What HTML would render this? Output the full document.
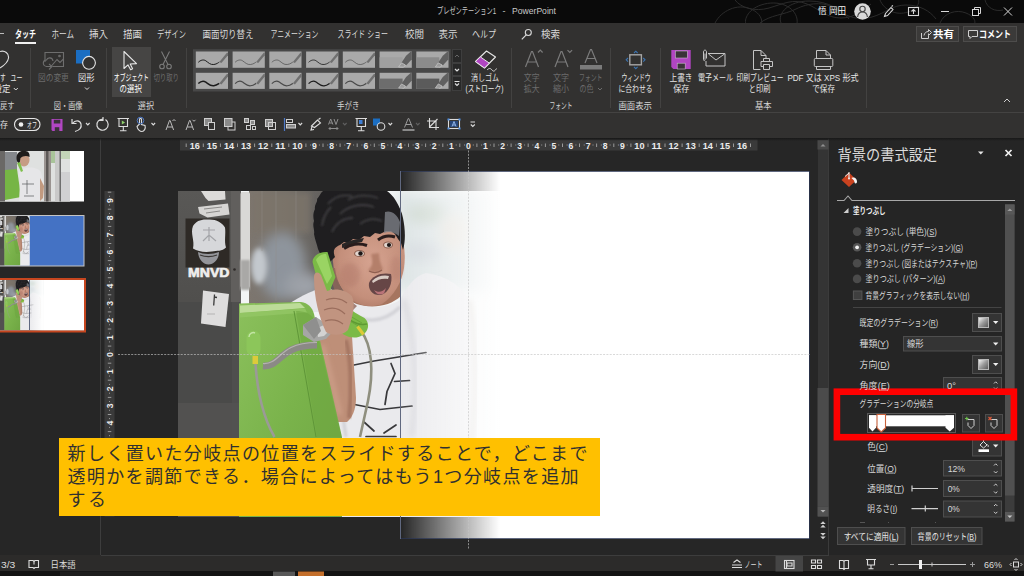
<!DOCTYPE html>
<html lang="ja">
<head>
<meta charset="utf-8">
<title>PowerPoint</title>
<style>
*{box-sizing:border-box;margin:0;padding:0}
html,body{width:1024px;height:576px;overflow:hidden;background:#262626}
body{position:relative;font-family:"Liberation Sans","Noto Sans CJK JP",sans-serif;font-size:11px;color:#d6d6d6;line-height:1}
.a{position:absolute;white-space:nowrap}
svg{position:absolute;overflow:visible}
svg text{font-family:"Liberation Sans","Noto Sans CJK JP",sans-serif}
#titlebar{left:0;top:0;width:1024px;height:23px;background:#0a0a0a}
#tabs{left:0;top:23px;width:1024px;height:22px;background:#323130}
#ribbon{left:0;top:45px;width:1024px;height:68px;background:#323130}
#qat{left:0;top:112px;width:1024px;height:26px;background:#323130;border-top:1px solid #444342}
#work{left:0;top:138px;width:829px;height:417px;background:#262626}
#pane{left:829px;top:138px;width:195px;height:417px;background:#252525}
#status{left:0;top:555px;width:1024px;height:16px;background:#2c2b2a}
#taskbar{left:0;top:571px;width:1024px;height:5px;background:#131313}
.sep{position:absolute;top:48px;width:1px;height:60px;background:#434241}
</style>
</head>
<body>
<div class="a" id="titlebar"></div>
<div class="a" id="tabs"></div>
<div class="a" id="ribbon"></div>
<div class="a" id="qat"></div>
<div class="a" id="work"></div>
<svg style="left:0;top:0;overflow:hidden" width="1024" height="23" viewBox="0 0 1024 23">
<g fill="none" stroke="#2b2b2b" stroke-width="1">
<path d="M715 23c6-12 22-20 36-14s14 20 2 20-10-18 8-24 34 2 36 14-12 14-16 4 8-22 28-22 34 10 40 18"/>
<path d="M735 0c6 8 20 12 34 8s24-10 38-4 20 14 34 14 22-8 30-14"/>
<path d="M760 23c10-8 24-8 36-14s28-8 40 0 22 12 36 8 20-12 34-12 24 6 30 14"/>
<path d="M880 0c4 10 16 16 28 12s14-14 6-16M940 23c4-10 16-14 26-10s12 12 4 14M985 0c2 8 10 12 18 10"/>
</g>
<circle cx="862.5" cy="11.5" r="8.3" fill="#d9d9d9"/>
<circle cx="862.5" cy="9" r="2.700" fill="none" stroke="#444" stroke-width="1.100"/>
<path d="M857.600 17c.4-3.400 2.400-5 4.900-5s4.500 1.600 4.900 5" fill="none" stroke="#444" stroke-width="1.100"/>
<path d="M884.500 16.500l1-3 5.500-6 2 2-5.500 6zM891.500 6.500l1.500-1" fill="none" stroke="#d8d8d8" stroke-width="1.100"/>
<rect x="908.500" y="7.500" width="10" height="8" fill="none" stroke="#d8d8d8" stroke-width="1.100"/>
<path d="M913.500 14v-4.500m-2 2l2-2 2 2" fill="none" stroke="#d8d8d8" stroke-width="1.100"/>
<path d="M941 11.500h8" stroke="#d8d8d8" stroke-width="1"/>
<rect x="972.500" y="9.500" width="6" height="6" fill="none" stroke="#d8d8d8" stroke-width="1"/>
<path d="M974.500 9.500v-2h6v6h-2" fill="none" stroke="#d8d8d8" stroke-width="1"/>
<path d="M1004 7.500l8 8m0-8l-8 8" stroke="#d8d8d8" stroke-width="1"/>
</svg>
<div class="a" style="left:0;top:33px;width:4px;height:1px;background:#bbb"></div>
<div class="a" style="left:15px;top:42px;width:21px;height:2px;background:#f0f0f0"></div>
<svg style="left:518px;top:26px" width="16" height="16" viewBox="518 26 16 16"><circle cx="528.300" cy="32.500" r="3" fill="none" stroke="#d8d8d8" stroke-width="1.100"/><path d="M526.200 34.800l-4.400 4.600" stroke="#d8d8d8" stroke-width="1.200"/></svg>
<div class="a" style="left:916px;top:26px;width:43px;height:16px;background:#3b3a39;border:1px solid #4d4c4b"></div>
<div class="a" style="left:963px;top:26px;width:54px;height:16px;background:#3b3a39;border:1px solid #4d4c4b"></div>
<svg style="left:920px;top:28px" width="12" height="12" viewBox="0 0 12 12"><path d="M1.500 5v5.500h7v-3M4 7.500c.5-2.500 2-4 4.500-4v-2l3 3-3 3v-2" fill="none" stroke="#cfcfcf" stroke-width="1"/></svg>
<svg style="left:967px;top:28px" width="12" height="12" viewBox="0 0 12 12"><path d="M1.500 2.500h9v6h-5.500l-2 2v-2h-1.500z" fill="none" stroke="#cfcfcf" stroke-width="1"/></svg>
<div class="sep" style="left:30px"></div>
<div class="sep" style="left:106px"></div>
<div class="sep" style="left:186px"></div>
<div class="sep" style="left:511px"></div>
<div class="sep" style="left:610px"></div>
<div class="sep" style="left:660px"></div>
<div class="sep" style="left:866px"></div>
<div class="a" style="left:112px;top:47px;width:39px;height:50px;background:#464544"></div>
<svg style="left:0;top:45px" width="1024" height="68" viewBox="0 45 1024 68">
<rect x="193" y="49.200" width="257.800" height="42.300" fill="#484848"/>
<rect x="195.8" y="51.5" width="32.200" height="16.3" fill="#a9a9a9"/><path d="M198.3 62.3c2-2 5-3.200 7.500-1.500s4.500 4.200 8 3.700 4.500-2 5.500-2.400" fill="none" stroke="#1c1c1c" stroke-width="1.0"/><path d="M219.4 61.9l7.500-9.200h1.100v2.600l-6.600 7.800z" fill="#707070"/><rect x="232.6" y="51.5" width="32.200" height="16.3" fill="#a9a9a9"/><path d="M235.1 62.3c2-2 5-3.200 7.500-1.500s4.500 4.200 8 3.700 4.500-2 5.500-2.400" fill="none" stroke="#4a4a4a" stroke-width="0.7"/><path d="M256.2 61.9l7.500-9.200h1.100v2.600l-6.600 7.800z" fill="#707070"/><rect x="269.3" y="51.5" width="32.200" height="16.3" fill="#a9a9a9"/><path d="M271.8 62.3c2-2 5-3.200 7.500-1.500s4.500 4.200 8 3.700 4.500-2 5.500-2.400" fill="none" stroke="#4a4a4a" stroke-width="0.7"/><path d="M292.9 61.9l7.500-9.200h1.100v2.600l-6.600 7.800z" fill="#707070"/><rect x="306.1" y="51.5" width="32.200" height="16.3" fill="#a9a9a9"/><path d="M308.6 62.3c2-2 5-3.200 7.500-1.500s4.500 4.200 8 3.700 4.500-2 5.500-2.400" fill="none" stroke="#1c1c1c" stroke-width="0.8"/><path d="M329.7 61.9l7.500-9.200h1.100v2.600l-6.600 7.800z" fill="#707070"/><rect x="342.8" y="51.5" width="32.200" height="16.3" fill="#a9a9a9"/><path d="M345.3 62.3c2-2 5-3.200 7.500-1.500s4.500 4.200 8 3.700 4.500-2 5.500-2.400" fill="none" stroke="#4a4a4a" stroke-width="0.7"/><path d="M366.4 61.9l7.500-9.200h1.100v2.600l-6.600 7.800z" fill="#707070"/><rect x="379.6" y="51.5" width="32.200" height="16.3" fill="#a9a9a9"/><rect x="379.6" y="57.3" width="23" height="10.5" fill="#a0a0a0"/><path d="M401.1 63.3l5-7.500 4.500-4h1.200v7.500l-5.500 6z" fill="#606060"/><path d="M398.6 67.0l3-4.200 3.800 2.200-1.800 2.200z" fill="#9a9a9a" stroke="#c8c8c8" stroke-width=".7"/><rect x="416.3" y="51.5" width="32.200" height="16.3" fill="#a9a9a9"/><rect x="416.3" y="57.3" width="23" height="10.5" fill="#8b8b8b"/><path d="M437.8 63.3l5-7.500 4.500-4h1.200v7.500l-5.500 6z" fill="#606060"/><path d="M435.3 67.0l3-4.200 3.800 2.200-1.800 2.200z" fill="#9a9a9a" stroke="#c8c8c8" stroke-width=".7"/><rect x="195.8" y="72.8" width="32.200" height="16.1" fill="#a9a9a9"/><path d="M198.3 83.6c2-2 5-3.200 7.500-1.500s4.500 4.200 8 3.700 4.500-2 5.500-2.400" fill="none" stroke="#1c1c1c" stroke-width="1.45"/><path d="M219.4 83.2l7.500-9.200h1.100v2.600l-6.600 7.800z" fill="#707070"/><rect x="232.6" y="72.8" width="32.200" height="16.1" fill="#a9a9a9"/><path d="M235.1 83.6c2-2 5-3.200 7.500-1.500s4.500 4.200 8 3.700 4.500-2 5.500-2.400" fill="none" stroke="#4a4a4a" stroke-width="1.15"/><path d="M256.2 83.2l7.500-9.200h1.100v2.600l-6.600 7.800z" fill="#707070"/><rect x="269.3" y="72.8" width="32.200" height="16.1" fill="#a9a9a9"/><path d="M271.8 83.6c2-2 5-3.200 7.500-1.500s4.500 4.200 8 3.700 4.500-2 5.500-2.400" fill="none" stroke="#4a4a4a" stroke-width="1.15"/><path d="M292.9 83.2l7.500-9.200h1.100v2.600l-6.600 7.800z" fill="#707070"/><rect x="306.1" y="72.8" width="32.200" height="16.1" fill="#a9a9a9"/><path d="M308.6 83.6c2-2 5-3.200 7.500-1.500s4.500 4.200 8 3.700 4.500-2 5.500-2.400" fill="none" stroke="#1c1c1c" stroke-width="1.25"/><path d="M329.7 83.2l7.500-9.200h1.100v2.600l-6.600 7.800z" fill="#707070"/><rect x="342.8" y="72.8" width="32.200" height="16.1" fill="#a9a9a9"/><path d="M345.3 83.6c2-2 5-3.200 7.500-1.500s4.500 4.200 8 3.700 4.500-2 5.500-2.400" fill="none" stroke="#4a4a4a" stroke-width="1.15"/><path d="M366.4 83.2l7.500-9.200h1.100v2.600l-6.600 7.800z" fill="#707070"/><rect x="379.6" y="72.8" width="32.200" height="16.1" fill="#a9a9a9"/><rect x="379.6" y="78.6" width="23" height="10.3" fill="#6d6d6d"/><path d="M401.1 84.4l5-7.500 4.500-4h1.200v7.500l-5.500 6z" fill="#606060"/><path d="M398.6 88.1l3-4.200 3.800 2.200-1.800 2.200z" fill="#9a9a9a" stroke="#c8c8c8" stroke-width=".7"/><rect x="416.3" y="72.8" width="32.200" height="16.1" fill="#a9a9a9"/><rect x="416.3" y="78.6" width="23" height="10.3" fill="#5b5b5b"/><path d="M437.8 84.4l5-7.500 4.500-4h1.200v7.500l-5.500 6z" fill="#606060"/><path d="M435.3 88.1l3-4.200 3.800 2.200-1.800 2.200z" fill="#9a9a9a" stroke="#c8c8c8" stroke-width=".7"/>
<g fill="#282828" stroke="#3e3e3e" stroke-width="1"><rect x="452.500" y="49.500" width="9" height="13"/><rect x="452.500" y="63.500" width="9" height="12"/><rect x="452.500" y="76.500" width="9" height="14"/></g>
<path d="M455 57l2-2 2 2" fill="none" stroke="#666" stroke-width="1"/>
<path d="M455 69l2 2 2-2" fill="none" stroke="#e0e0e0" stroke-width="1.200"/>
<path d="M454.500 81.500h5M455 83.500l2 2 2-2" fill="none" stroke="#e0e0e0" stroke-width="1.100"/>
<!-- left partial icon -->
<path d="M0 51.500c5-1.500 9 2 8.500 6.500-.5 4-4.500 7.500-8.500 10" fill="none" stroke="#dcdcdc" stroke-width="1.100"/>
<path d="M13.800 88l2 2 2-2" fill="none" stroke="#dcdcdc" stroke-width="1"/>
<!-- change picture (dim) -->
<g fill="none" stroke="#6e6e6e" stroke-width="1.100"><path d="M45 62v-9.500h18.500v14h-11"/><path d="M51 66.500l6-7 3 3 3.500-3.500"/><circle cx="59.500" cy="56" r=".8"/><path d="M52 66.500h-5.500c-4.500-1-4-6.500 0-6.500 1-3 6-3 6.500 1"/><path d="M49 64l3 2.500-3 3"/></g>
<!-- shapes -->
<rect x="76" y="50" width="14" height="13.500" fill="#1b6ec2"/>
<circle cx="89" cy="62.800" r="6.400" fill="#323130" stroke="#e6e6e6" stroke-width="1.100"/>
<path d="M85 87.500l2 2 2-2" fill="none" stroke="#dcdcdc" stroke-width="1"/>
<!-- cursor -->
<path d="M124 51.500v17l4-3.600 2.600 4.800 2-1-2.400-4.700 6.300-.4z" fill="none" stroke="#e8e8e8" stroke-width="1.100" stroke-linejoin="round"/>
<!-- scissors dim -->
<g fill="none" stroke="#7a7a7a" stroke-width="1.100"><path d="M161.500 51.500l6.500 13M169.500 51.500l-6.500 13"/><circle cx="162" cy="66.500" r="2.300"/><circle cx="169" cy="66.500" r="2.300"/></g>
<!-- eraser -->
<path d="M475.500 61.500l11-10.500 9 6-11 11z" fill="none" stroke="#e6e6e6" stroke-width="1.100" stroke-linejoin="round"/>
<path d="M475.500 61.500l4.800-4.600 9 6.200-4.800 4.900z" fill="#b146c2" stroke="#e6e6e6" stroke-width="1"/>
<path d="M487 70c2-2 3.500-2 5 0s3 1 4.500-1.500" fill="none" stroke="#dcdcdc" stroke-width="1"/>
<!-- font group (dim) -->
<g fill="none" stroke="#7b7b7b" stroke-width="1.200"><path d="M525.500 67l6-15.500h1l6 15.500M527.500 62h9"/><path d="M538 52.500l2.300-2.300 2.300 2.300"/>
<path d="M555 67l6-15.500h1l6 15.500M557 62h9"/><path d="M567.500 50.200l2.300 2.300 2.300-2.300"/>
<path d="M585 63l5.500-13.500h1l5.500 13.500M587 58.500h8"/></g>
<rect x="580" y="65" width="22" height="4.500" fill="#7b7b7b"/>
<path d="M598 88l2 2 2-2" fill="none" stroke="#6c6c6c" stroke-width="1"/>
<!-- fit to window -->
<rect x="629.800" y="54.800" width="11.600" height="10" fill="none" stroke="#a6a6a6" stroke-width="1.400"/>
<g fill="none" stroke="#3b74b3" stroke-width="1.100"><path d="M634 53l1.800-1.800 1.800 1.800M634 66.800l1.800 1.800 1.800-1.800M628 58l-1.800 1.800 1.800 1.800M643.200 58l1.800 1.800-1.800 1.800"/></g>
<!-- save -->
<path d="M671.300 50h19.400v19h-17.400l-2-2z" fill="#b146c2"/>
<rect x="675.300" y="51" width="12" height="7" fill="#3a3338" stroke="#c9b9cc" stroke-width=".6"/><rect x="677.200" y="63.200" width="8" height="5.800" fill="#3a3338" stroke="#c9b9cc" stroke-width=".6"/>
<!-- email -->
<g fill="none" stroke="#c4c4c4" stroke-width="1"><path d="M708 53.500h17v12.500h-19v-5"/><path d="M708.500 54l7.500 6 8.500-6"/><path d="M706.500 58.500v-6.500c0-2.500-3-2.500-3 0v7.500c0 1.500 1.500 1.500 1.500 0v-6"/></g>
<!-- print preview -->
<g fill="none" stroke="#c4c4c4" stroke-width="1"><path d="M760.500 69.500h-7v-19h7.500l5 5v3"/><path d="M761 50.500v5h5"/><path d="M763.500 66.500h-2.500v-5h11.500v5h-2.500"/><path d="M763.500 61.500v-3h6v3M763.500 64.500h6v5h-6z"/></g>
<!-- pdf/xps -->
<g fill="none" stroke="#c4c4c4" stroke-width="1"><path d="M816.500 58v-7.500h9.500l4.500 4.500v3"/><path d="M826 50.500v4.500h4.500"/><rect x="814.300" y="58.500" width="18.500" height="8" rx="1"/><path d="M816.500 66.500v3h14v-3"/></g>
<path d="M1004 102l3-3 3 3" fill="none" stroke="#cfcfcf" stroke-width="1"/>
</svg>
<svg style="left:0;top:113px" width="512" height="25" viewBox="0 113 512 25">
<rect x="14.500" y="118.500" width="25.500" height="12" rx="6" fill="none" stroke="#e6e6e6" stroke-width="1.100"/><circle cx="21" cy="124.500" r="2.300" fill="#f0f0f0"/>
<path d="M51.500 119h11v12h-10l-1-1z" fill="#b146c2"/><rect x="53.800" y="119.800" width="6.500" height="3.700" fill="#3a3338"/><rect x="54.800" y="127.200" width="4.500" height="3.800" fill="#3a3338"/>
<g fill="none" stroke="#dcdcdc" stroke-width="1.200">
<path d="M72 119v4.500h4.500M72.500 123.500c2.500-3.500 7.500-3.500 8.500.5s-2.500 6.500-6 7.500"/>
<path d="M86 123l1.800 1.800 1.800-1.800"/>
<path d="M103.500 119.500c-4-1-7.500 2.500-6.500 6.500s6 5.500 9 3 3-7-.5-9.500M103 117v3.500h-3.500"/>
</g>
<g fill="none" stroke="#dcdcdc" stroke-width="1.100"><path d="M117.500 118.500h11.500M119 118.500v8h8.500v-8M123.300 126.500v4M120 130.800h6.500"/></g>
<path d="M121.800 120.500v4l3.300-2z" fill="#8fd06a"/>
<g fill="none" stroke="#dcdcdc" stroke-width="1.100"><path d="M139.500 124v-4.500c0-1.500 2-1.500 2 0v5l3.500 1c1 3-1 6-3 6s-4.500-2-5-5z"/></g>
<circle cx="140.500" cy="120.500" r="3.300" fill="none" stroke="#4e79c7" stroke-width="1"/>
<path d="M151.500 123l1.800 1.800 1.800-1.800" fill="none" stroke="#dcdcdc" stroke-width="1.200"/>
<g fill="none" stroke="#bcbcbc" stroke-width="1"><path d="M166 130l3.500-9.500h.6l3.500 9.500M167.300 127h5"/><path d="M172.500 121l1.500-1.500 1.500 1.500"/>
<path d="M186 130l3.500-9.500h.6l3.500 9.500M187.300 127h5"/><path d="M192.500 119.800l1.500 1.500 1.500-1.500"/></g>
<rect x="204.500" y="118.500" width="7" height="7" fill="#8a8a8a" stroke="#cfcfcf" stroke-width="1"/><rect x="208.500" y="122.500" width="6" height="7" fill="#323130" stroke="#cfcfcf" stroke-width="1"/>
<rect x="228" y="122" width="7" height="8" fill="none" stroke="#cfcfcf" stroke-width="1"/><rect x="224.500" y="118.500" width="7.500" height="8" fill="#8a8a8a" stroke="#cfcfcf" stroke-width="1"/>
<g fill="#8a8a8a" stroke="#cfcfcf" stroke-width="1"><rect x="244.500" y="118.500" width="4" height="4"/><rect x="250.500" y="120.500" width="4" height="4"/><rect x="246.500" y="125.500" width="4" height="4" fill="none"/><rect x="252.500" y="126.500" width="3" height="3" fill="none"/></g>
<rect x="265.500" y="119.500" width="7" height="7" fill="#8a8a8a" stroke="#cfcfcf" stroke-width="1"/><rect x="268.500" y="122.500" width="7" height="7" fill="none" stroke="#cfcfcf" stroke-width="1"/>
<path d="M284.500 118v13" stroke="#4e79c7" stroke-width="1.200"/><rect x="286.500" y="119.500" width="6" height="3" fill="none" stroke="#cfcfcf" stroke-width="1"/><rect x="286.500" y="124.500" width="9" height="3.500" fill="#8a8a8a" stroke="#cfcfcf" stroke-width="1"/>
<path d="M298.500 123l1.800 1.800 1.800-1.800" fill="none" stroke="#dcdcdc" stroke-width="1.200"/>
<path d="M311.500 126l6-6 3 3-6 4.500zM312 126.500l-1 3.500 3-.5M318.500 119.500l2-1.500" fill="none" stroke="#dcdcdc" stroke-width="1.100"/>
<g fill="none" stroke="#8e8e8e" stroke-width="1"><path d="M328.500 124.500l2.200-5.500 2.200 5.500M329.300 123h3M334 119l2 5.500 2-5.500"/><path d="M329 128.500h9M330.500 127l-1.500 1.500 1.500 1.500M336.500 127l1.500 1.500-1.500 1.500"/></g>
<path d="M343 123l1.800 1.800 1.800-1.800" fill="none" stroke="#5f5f5f" stroke-width="1.200"/>
<g fill="none" stroke="#dcdcdc" stroke-width="1.100"><path d="M355.500 118.500h11.500M357 118.500v8h8.500v-8M361.300 126.500v4M358 130.800h6.500"/></g>
<rect x="359" y="120" width="3.500" height="4" fill="#3f7fd6"/>
<rect x="373" y="118.500" width="7" height="7" fill="#1b6ec2"/><circle cx="381" cy="126.500" r="3.800" fill="#323130" stroke="#dcdcdc" stroke-width="1.100"/>
<path d="M388.500 123l1.800 1.800 1.800-1.800" fill="none" stroke="#dcdcdc" stroke-width="1.200"/>
<g fill="none" stroke="#9a9a9a" stroke-width="1"><path d="M404.500 127.500l3.700-9h.6l3.700 9M405.800 124.500h5.500"/></g><rect x="402.500" y="129" width="12" height="2" fill="#8a8a8a"/>
<path d="M416 123l1.800 1.800 1.800-1.800" fill="none" stroke="#5f5f5f" stroke-width="1.200"/>
<g fill="none" stroke="#dcdcdc" stroke-width="1.100"><path d="M427 121h9v9M429.500 118v9.500h9.500M437.500 119l-8 8"/></g>
<rect x="448.500" y="119.500" width="11" height="9" fill="none" stroke="#dcdcdc" stroke-width="1.100"/><rect x="450" y="121" width="8" height="6" fill="#27467a"/><path d="M452 126.500l2-5 2 5M452.800 125h2.500" fill="none" stroke="#9cc0f0" stroke-width=".9"/>
<g fill="#4e8de0"><rect x="447.500" y="118.500" width="2" height="2"/><rect x="458.500" y="118.500" width="2" height="2"/><rect x="447.500" y="127.500" width="2" height="2"/><rect x="458.500" y="127.500" width="2" height="2"/></g>
<path d="M470.500 122h4.500M470.800 124.500l2 2 2-2" fill="none" stroke="#dcdcdc" stroke-width="1.100"/>
</svg>
<svg style="left:0;top:138px" width="829" height="417" viewBox="0 138 829 417"><rect x="180" y="139.500" width="577.500" height="11" fill="#3a3a3a"/><rect x="104.500" y="191" width="10" height="325.500" fill="#3a3a3a"/><path d="M310.1 145h1M318.9 145h1M327.2 145h1M336.0 145h1M344.3 145h1M353.1 145h1M361.4 145h1M370.2 145h1M378.5 145h1M387.3 145h1M395.6 145h1M404.4 145h1M412.7 145h1M421.5 145h1M429.8 145h1M438.6 145h1M446.9 145h1M455.7 145h1M464.0 145h1M472.8 145h1M481.1 145h1M489.9 145h1M498.2 145h1M507.0 145h1M515.3 145h1M524.1 145h1M532.4 145h1M541.2 145h1M549.5 145h1M558.3 145h1M566.6 145h1M575.4 145h1M583.7 145h1M592.5 145h1M600.8 145h1M609.6 145h1M617.9 145h1M626.7 145h1M186.2 143.500v3.500M203.3 143.500v3.500M220.4 143.500v3.500M237.5 143.500v3.500M254.6 143.500v3.500M271.8 143.500v3.500M288.8 143.500v3.500M305.9 143.500v3.500M323.0 143.500v3.500M340.1 143.500v3.500M357.2 143.500v3.500M374.3 143.500v3.500M391.4 143.500v3.500M408.5 143.500v3.500M425.6 143.500v3.500M442.8 143.500v3.500M459.8 143.500v3.500M476.9 143.500v3.500M494.0 143.500v3.500M511.1 143.500v3.500M528.2 143.500v3.500M545.4 143.500v3.500M562.5 143.500v3.500M579.5 143.500v3.500M596.6 143.500v3.500M613.8 143.500v3.500M630.9 143.500v3.500M648.0 143.500v3.500M665.0 143.500v3.500M682.1 143.500v3.500M699.2 143.500v3.500M716.4 143.500v3.500M733.5 143.500v3.500M750.5 143.500v3.500M109 196.3h1M109 205.1h1M109 213.4h1M109 222.2h1M109 230.5h1M109 239.3h1M109 247.6h1M109 256.4h1M109 264.7h1M109 273.5h1M109 281.8h1M109 290.6h1M109 298.9h1M109 307.7h1M109 316.0h1M109 324.8h1M109 333.1h1M109 341.9h1M109 350.2h1M109 359.0h1M109 367.3h1M109 376.1h1M109 384.4h1M109 393.2h1M109 401.5h1M109 410.3h1M109 418.6h1M109 427.4h1M109 435.7h1M109 444.5h1M109 452.8h1M109 461.6h1M109 469.9h1M109 478.7h1M109 487.0h1M109 495.8h1M109 504.1h1M109 512.9h1M107.800 192.2h3.500M107.800 209.2h3.500M107.800 226.4h3.500M107.800 243.5h3.500M107.800 260.6h3.500M107.800 277.7h3.500M107.800 294.8h3.500M107.800 311.9h3.500M107.800 329.0h3.500M107.800 346.1h3.500M107.800 363.2h3.500M107.800 380.2h3.500M107.800 397.4h3.500M107.800 414.5h3.500M107.800 431.6h3.500M107.800 448.7h3.500M107.800 465.8h3.500M107.800 482.9h3.500M107.800 500.0h3.500" stroke="#9a9a9a" stroke-width="1" fill="none"/><text x="189.7" y="148.700" font-size="9.500" font-weight="bold" fill="#ececec" textLength="10.2" lengthAdjust="spacingAndGlyphs">16</text><text x="206.8" y="148.700" font-size="9.500" font-weight="bold" fill="#ececec" textLength="10.2" lengthAdjust="spacingAndGlyphs">15</text><text x="223.9" y="148.700" font-size="9.500" font-weight="bold" fill="#ececec" textLength="10.2" lengthAdjust="spacingAndGlyphs">14</text><text x="241.0" y="148.700" font-size="9.500" font-weight="bold" fill="#ececec" textLength="10.2" lengthAdjust="spacingAndGlyphs">13</text><text x="258.1" y="148.700" font-size="9.500" font-weight="bold" fill="#ececec" textLength="10.2" lengthAdjust="spacingAndGlyphs">12</text><text x="275.2" y="148.700" font-size="9.500" font-weight="bold" fill="#ececec" textLength="10.2" lengthAdjust="spacingAndGlyphs">11</text><text x="292.3" y="148.700" font-size="9.500" font-weight="bold" fill="#ececec" textLength="10.2" lengthAdjust="spacingAndGlyphs">10</text><text x="312.1" y="148.700" font-size="9.500" font-weight="bold" fill="#ececec" textLength="4.8" lengthAdjust="spacingAndGlyphs">9</text><text x="329.2" y="148.700" font-size="9.500" font-weight="bold" fill="#ececec" textLength="4.8" lengthAdjust="spacingAndGlyphs">8</text><text x="346.3" y="148.700" font-size="9.500" font-weight="bold" fill="#ececec" textLength="4.8" lengthAdjust="spacingAndGlyphs">7</text><text x="363.4" y="148.700" font-size="9.500" font-weight="bold" fill="#ececec" textLength="4.8" lengthAdjust="spacingAndGlyphs">6</text><text x="380.5" y="148.700" font-size="9.500" font-weight="bold" fill="#ececec" textLength="4.8" lengthAdjust="spacingAndGlyphs">5</text><text x="397.6" y="148.700" font-size="9.500" font-weight="bold" fill="#ececec" textLength="4.8" lengthAdjust="spacingAndGlyphs">4</text><text x="414.7" y="148.700" font-size="9.500" font-weight="bold" fill="#ececec" textLength="4.8" lengthAdjust="spacingAndGlyphs">3</text><text x="431.8" y="148.700" font-size="9.500" font-weight="bold" fill="#ececec" textLength="4.8" lengthAdjust="spacingAndGlyphs">2</text><text x="448.9" y="148.700" font-size="9.500" font-weight="bold" fill="#ececec" textLength="4.8" lengthAdjust="spacingAndGlyphs">1</text><text x="466.0" y="148.700" font-size="9.500" font-weight="bold" fill="#ececec" textLength="4.8" lengthAdjust="spacingAndGlyphs">0</text><text x="483.1" y="148.700" font-size="9.500" font-weight="bold" fill="#ececec" textLength="4.8" lengthAdjust="spacingAndGlyphs">1</text><text x="500.2" y="148.700" font-size="9.500" font-weight="bold" fill="#ececec" textLength="4.8" lengthAdjust="spacingAndGlyphs">2</text><text x="517.3" y="148.700" font-size="9.500" font-weight="bold" fill="#ececec" textLength="4.8" lengthAdjust="spacingAndGlyphs">3</text><text x="534.4" y="148.700" font-size="9.500" font-weight="bold" fill="#ececec" textLength="4.8" lengthAdjust="spacingAndGlyphs">4</text><text x="551.5" y="148.700" font-size="9.500" font-weight="bold" fill="#ececec" textLength="4.8" lengthAdjust="spacingAndGlyphs">5</text><text x="568.6" y="148.700" font-size="9.500" font-weight="bold" fill="#ececec" textLength="4.8" lengthAdjust="spacingAndGlyphs">6</text><text x="585.7" y="148.700" font-size="9.500" font-weight="bold" fill="#ececec" textLength="4.8" lengthAdjust="spacingAndGlyphs">7</text><text x="602.8" y="148.700" font-size="9.500" font-weight="bold" fill="#ececec" textLength="4.8" lengthAdjust="spacingAndGlyphs">8</text><text x="619.9" y="148.700" font-size="9.500" font-weight="bold" fill="#ececec" textLength="4.8" lengthAdjust="spacingAndGlyphs">9</text><text x="634.3" y="148.700" font-size="9.500" font-weight="bold" fill="#ececec" textLength="10.2" lengthAdjust="spacingAndGlyphs">10</text><text x="651.4" y="148.700" font-size="9.500" font-weight="bold" fill="#ececec" textLength="10.2" lengthAdjust="spacingAndGlyphs">11</text><text x="668.5" y="148.700" font-size="9.500" font-weight="bold" fill="#ececec" textLength="10.2" lengthAdjust="spacingAndGlyphs">12</text><text x="685.6" y="148.700" font-size="9.500" font-weight="bold" fill="#ececec" textLength="10.2" lengthAdjust="spacingAndGlyphs">13</text><text x="702.7" y="148.700" font-size="9.500" font-weight="bold" fill="#ececec" textLength="10.2" lengthAdjust="spacingAndGlyphs">14</text><text x="719.8" y="148.700" font-size="9.500" font-weight="bold" fill="#ececec" textLength="10.2" lengthAdjust="spacingAndGlyphs">15</text><text x="736.9" y="148.700" font-size="9.500" font-weight="bold" fill="#ececec" textLength="10.2" lengthAdjust="spacingAndGlyphs">16</text><text transform="translate(112.800 203.1) rotate(-90)" font-size="9.500" font-weight="bold" fill="#ececec" textLength="4.800" lengthAdjust="spacingAndGlyphs">9</text><text transform="translate(112.800 220.2) rotate(-90)" font-size="9.500" font-weight="bold" fill="#ececec" textLength="4.800" lengthAdjust="spacingAndGlyphs">8</text><text transform="translate(112.800 237.3) rotate(-90)" font-size="9.500" font-weight="bold" fill="#ececec" textLength="4.800" lengthAdjust="spacingAndGlyphs">7</text><text transform="translate(112.800 254.4) rotate(-90)" font-size="9.500" font-weight="bold" fill="#ececec" textLength="4.800" lengthAdjust="spacingAndGlyphs">6</text><text transform="translate(112.800 271.5) rotate(-90)" font-size="9.500" font-weight="bold" fill="#ececec" textLength="4.800" lengthAdjust="spacingAndGlyphs">5</text><text transform="translate(112.800 288.6) rotate(-90)" font-size="9.500" font-weight="bold" fill="#ececec" textLength="4.800" lengthAdjust="spacingAndGlyphs">4</text><text transform="translate(112.800 305.7) rotate(-90)" font-size="9.500" font-weight="bold" fill="#ececec" textLength="4.800" lengthAdjust="spacingAndGlyphs">3</text><text transform="translate(112.800 322.8) rotate(-90)" font-size="9.500" font-weight="bold" fill="#ececec" textLength="4.800" lengthAdjust="spacingAndGlyphs">2</text><text transform="translate(112.800 339.9) rotate(-90)" font-size="9.500" font-weight="bold" fill="#ececec" textLength="4.800" lengthAdjust="spacingAndGlyphs">1</text><text transform="translate(112.800 357.0) rotate(-90)" font-size="9.500" font-weight="bold" fill="#ececec" textLength="4.800" lengthAdjust="spacingAndGlyphs">0</text><text transform="translate(112.800 374.1) rotate(-90)" font-size="9.500" font-weight="bold" fill="#ececec" textLength="4.800" lengthAdjust="spacingAndGlyphs">1</text><text transform="translate(112.800 391.2) rotate(-90)" font-size="9.500" font-weight="bold" fill="#ececec" textLength="4.800" lengthAdjust="spacingAndGlyphs">2</text><text transform="translate(112.800 408.3) rotate(-90)" font-size="9.500" font-weight="bold" fill="#ececec" textLength="4.800" lengthAdjust="spacingAndGlyphs">3</text><text transform="translate(112.800 425.4) rotate(-90)" font-size="9.500" font-weight="bold" fill="#ececec" textLength="4.800" lengthAdjust="spacingAndGlyphs">4</text><text transform="translate(112.800 442.5) rotate(-90)" font-size="9.500" font-weight="bold" fill="#ececec" textLength="4.800" lengthAdjust="spacingAndGlyphs">5</text><text transform="translate(112.800 459.6) rotate(-90)" font-size="9.500" font-weight="bold" fill="#ececec" textLength="4.800" lengthAdjust="spacingAndGlyphs">6</text><text transform="translate(112.800 476.7) rotate(-90)" font-size="9.500" font-weight="bold" fill="#ececec" textLength="4.800" lengthAdjust="spacingAndGlyphs">7</text><text transform="translate(112.800 493.8) rotate(-90)" font-size="9.500" font-weight="bold" fill="#ececec" textLength="4.800" lengthAdjust="spacingAndGlyphs">8</text><text transform="translate(112.800 510.9) rotate(-90)" font-size="9.500" font-weight="bold" fill="#ececec" textLength="4.800" lengthAdjust="spacingAndGlyphs">9</text></svg>
<div class="a" style="left:100px;top:138px;width:1px;height:417px;background:#3d3d3d"></div>
<div class="a" style="left:0;top:138px;width:1024px;height:3px;background:linear-gradient(#181818,rgba(30,30,30,0));z-index:5"></div>
<!-- slide photo -->
<svg id="photo" style="left:178px;top:191px" width="580" height="326" viewBox="178 191 580 326">
<defs>
<filter id="b0" x="-5%" y="-5%" width="110%" height="110%"><feGaussianBlur stdDeviation=".55"/></filter>
<filter id="b1" x="-10%" y="-10%" width="120%" height="120%"><feGaussianBlur stdDeviation="1.200"/></filter>
<filter id="b2" x="-20%" y="-20%" width="140%" height="140%"><feGaussianBlur stdDeviation="2.500"/></filter>
<filter id="b4" x="-30%" y="-30%" width="160%" height="160%"><feGaussianBlur stdDeviation="6"/></filter>
<clipPath id="pc"><rect x="178" y="191" width="580" height="326"/></clipPath>
<linearGradient id="glass" x1="0" y1="0" x2="1" y2="0"><stop offset="0" stop-color="#7d766f"/><stop offset=".4" stop-color="#757069"/><stop offset=".7" stop-color="#666360"/><stop offset="1" stop-color="#5a5755"/></linearGradient>
<linearGradient id="metal" x1="0" y1="0" x2="0" y2="1"><stop offset="0" stop-color="#595856"/><stop offset=".45" stop-color="#4d4c4a"/><stop offset="1" stop-color="#4a4a49"/></linearGradient>
<linearGradient id="grn" x1="0" y1="0" x2="1" y2="1"><stop offset="0" stop-color="#8bc05c"/><stop offset=".5" stop-color="#7ab34b"/><stop offset="1" stop-color="#6ea642"/></linearGradient>
<radialGradient id="skin" cx=".55" cy=".45" r=".65"><stop offset="0" stop-color="#d6a390"/><stop offset=".7" stop-color="#c48f7b"/><stop offset="1" stop-color="#a97663"/></radialGradient>
</defs>
<g clip-path="url(#pc)" id="pg">
<rect x="178" y="191" width="580" height="326" fill="#f3f5f5"/>
<!-- right bg -->
<rect x="396" y="191" width="120" height="100" fill="#dde4e5" filter="url(#b4)"/>
<ellipse cx="428" cy="214" rx="20" ry="10" fill="#cfd9d1" filter="url(#b4)"/>
<ellipse cx="424" cy="252" rx="18" ry="9" fill="#d4d9de" filter="url(#b4)"/>
<ellipse cx="455" cy="232" rx="14" ry="18" fill="#e3e1da" filter="url(#b4)"/>
<!-- glass -->
<rect x="249" y="191" width="96" height="118" fill="url(#glass)"/>
<rect x="252" y="193" width="58" height="40" fill="#7d746b" filter="url(#b2)" opacity=".75"/>
<ellipse cx="282" cy="266" rx="24" ry="34" fill="#8e949c" filter="url(#b4)"/>
<ellipse cx="259" cy="266" rx="8" ry="18" fill="#c3c8cd" filter="url(#b2)"/>
<ellipse cx="304" cy="286" rx="18" ry="14" fill="#9da1a8" filter="url(#b4)"/>
<path d="M276 191v110M262 191v60M296 191v50" stroke="#908c88" stroke-width="1" opacity=".45"/>
<!-- left metal -->
<rect x="178" y="191" width="54" height="326" fill="url(#metal)"/>
<rect x="231" y="191" width="10" height="125" fill="#615f5d"/>
<circle cx="234.500" cy="269.500" r="1.300" fill="#2e2b29"/>
<rect x="240.500" y="192" width="9.500" height="96" rx="2" fill="#d9d8d6"/>
<rect x="240.500" y="260" width="9.500" height="30" fill="#a9a8a6" filter="url(#b1)"/>
<rect x="178" y="302" width="62" height="215" fill="#4a4a49"/>
<rect x="178" y="403" width="62" height="114" fill="#525150"/>
<path d="M178 402.500h61" stroke="#3a3a39" stroke-width="1.500" filter="url(#b0)"/>
<rect x="232" y="302" width="7" height="215" fill="#545352" opacity=".6"/>
<!-- stickers -->
<path d="M201 191h24l.5 8.500-17 1.500-3-3z" fill="#dcdbd9"/>
<path d="M198 207l30-3.500 1.500 11-22 3-8-4z" fill="#d6d5d3"/>
<path d="M204 209l18-2M206 213l14-2" stroke="#8c8b89" stroke-width="1"/>
<rect x="185.500" y="218.500" width="44" height="49" fill="#2e2a26"/>
<path d="M193 226c3-5 8-7 15-6.500 8-.5 14 3 17 8 1 7-1 13 1 20-4 4-9 3-14 4-8 1-14 0-19-3 2-8-3-15 0-22.500z" fill="#d6d7da"/>
<path d="M203 230h12M209 227v14M203 241l6-6 7 6" stroke="#a3a4a8" stroke-width="1.200" fill="none"/>
<path d="M198 252c5 2.500 15 2.500 21 0 0 7-5 12.500-10.500 12.500s-10-5.500-10.500-12.500z" fill="#94959a"/>
<path d="M200 255c5 2 12 2 17 0" stroke="#3b3835" stroke-width="1.200" fill="none"/>
<text x="188" y="276.500" font-weight="bold" font-size="12" fill="#f0efed" stroke="#f0efed" stroke-width=".6" textLength="41.500" lengthAdjust="spacingAndGlyphs">MNVD</text>
<path d="M203 290.500l26 3.500-3.500 33-24.500-3.500z" fill="#dedddd"/>
<path d="M214.500 294.500l-.8 11M214 297l3 .5" stroke="#3a3a3a" stroke-width="1.300"/>
<path d="M207 314h8" stroke="#aaa" stroke-width=".8"/>
<!-- shirt -->
<path d="M296 350c3-18 20-32 46-42l10-8c12 8 32 10 48 0 6-12 14-24 26-27 22 3 38 14 46 32l6 60-3 152H338l-9-70-15-40z" fill="#eaeaed"/>
<path d="M346 437c-6-32-4-82 6-122 10 6 30 10 48-8" fill="none" stroke="#d3d3d8" stroke-width="3.500" filter="url(#b1)"/>
<path d="M404 300c10 30 14 80 8 137" fill="none" stroke="#dcdce0" stroke-width="6" filter="url(#b2)"/>
<path d="M470 300c6 30 8 90 2 140" fill="none" stroke="#d9d5cf" stroke-width="5" filter="url(#b2)"/>
<!-- shirt graphic -->
<g stroke="#38383b" stroke-width="1.700" fill="none" stroke-linecap="round">
<path d="M354 365l20-4 52-8.500"/><path d="M391 363.500l4 10-8 18-2 13"/><path d="M394.500 381.500l15-1"/><path d="M352 404l28 5.500 32-3.500"/><path d="M364 422l10 9M396 425l-12 8"/><path d="M366 436.500h30"/>
</g>
<path d="M284 308c10-9 26-17 44-22l14 14v12h-58z" fill="#e6e6ea" filter="url(#b0)"/>
<!-- arm -->
<path d="M312 332c12-6 34-4 40 4l4 62c0 12-4 20-9 24h-24z" fill="#be8f78"/>
<path d="M346 340c5 20 6 50 3 78" stroke="#a67763" stroke-width="4" fill="none" filter="url(#b1)"/>
<path d="M322 345c6 20 12 45 18 70" stroke="#cfa08b" stroke-width="4" fill="none" filter="url(#b2)"/>
<!-- green box -->
<path d="M239 303.500l62-1.500c7 1 11 5 13 12l28 123v80H239z" fill="url(#grn)"/>
<path d="M240 305.500l60-2.500 5 5-65 5z" fill="#bcdc98"/>
<path d="M240 313l65-4.500 2 4-67 5z" fill="#93c765" opacity=".8"/>
<path d="M294 311l22 126" stroke="#5f9638" stroke-width="1"/>
<path d="M296 311c8 0 14 2 18 8l27 118h-24z" fill="#6da640" opacity=".55"/>
<rect x="246.500" y="331" width="14" height="25" rx="6.500" fill="#8cc65a"/>
<path d="M249 337c0-4 4-5 6-4" stroke="#c3e4a4" stroke-width="1.500" fill="none"/>
<rect x="252.500" y="356" width="5.500" height="8" fill="#dccb3a"/>
<path d="M255.500 364c2 30 8 54 19 73" stroke="#9b9a97" stroke-width="2.600" fill="none"/>
<path d="M263 366c12 1 16-10 28-16 8-4 18-5 26-5" stroke="#8b8986" stroke-width="7" fill="none"/>
<path d="M263 363.500c12 1 16-10 28-16 8-4 18-5 26-5" stroke="#b5b3b0" stroke-width="1.200" fill="none"/>
<path d="M303 325l13-8 9 6 11-4 2 7-12 13-12 3-11-7z" fill="#a6a6a5"/>
<path d="M317 328l12-5 4 4-9 9-6 1z" fill="#d3d3d2"/>
<path d="M303 325l13-8 5 14-7 8z" fill="#8f8f8e"/>
<!-- cord -->
<path d="M361 331c11 14 13 40 7 70l-8 36" stroke="#8f8f7f" stroke-width="2.600" fill="none"/>
<!-- neck/face -->
<path d="M344 296c14 14 42 14 57 0v-16h-57z" fill="#a6755f"/>
<path d="M333 262c-1-16 6-28 20-32 18-5 36-6 46 0 5 10 7 24 5 38-2 14-10 28-22 36-10 4-22 2-30-4-10-8-18-22-19-38z" fill="url(#skin)"/>
<path d="M335 268c2 16 10 30 22 38l-5 5c-14-9-22-26-21-43z" fill="#90675a" opacity=".8"/>
<!-- hair -->
<path d="M323 191c-3 2-3 5-6 8 1 3-3 6-2 10-2 4-2 8-1 12-2 5 1 9 0 13 1 6 3 10 4 15 2 4 3 8 6 12l3 4 8-8c-3-7 0-10 5-12l4-3 4 1 5-4 6 1 5-4 6 1 5-4 5 1 6-3 5 0 4 3 3 5 3 4 2 7c3-10 2-22 0-32-1-6-4-12-7-17-3-5-6-8-9-10z" fill="#1f1e20"/>
<path d="M328 204c6-7 15-10 24-8M340 214c9-9 23-11 34-7M332 232c4-9 12-14 21-14M360 224c7-5 15-6 22-3M322 226c1-8 4-14 9-19M348 200c8-5 20-6 30-2" stroke="#403f42" stroke-width="1.800" fill="none" filter="url(#b1)"/>
<path d="M385 212c6-2 12 2 15 10l-1 14c-5-4-10-5-15-3z" fill="#7c7f86" opacity=".8" filter="url(#b0)"/>
<path d="M342 244c6-3 14-5 22-6l-2 4c-8 1-14 3-20 6z" fill="#2a2626"/>
<!-- eyes brows -->
<g filter="url(#b0)">
<path d="M344 248.500c6-4.500 15-6 23-3" stroke="#2a1f1c" stroke-width="3" fill="none"/>
<path d="M378 240c5-4 11-5 17-3" stroke="#2a1f1c" stroke-width="3" fill="none"/>
<ellipse cx="359.500" cy="253.500" rx="5.500" ry="3.600" fill="#8f6252"/>
<ellipse cx="388" cy="245" rx="5" ry="3.400" fill="#8f6252"/>
<ellipse cx="359.500" cy="253.500" rx="4.300" ry="2.600" fill="#e3d6cf"/><circle cx="360.500" cy="253.500" r="2.200" fill="#1f1815"/>
<ellipse cx="388" cy="245" rx="3.900" ry="2.500" fill="#e3d6cf"/><circle cx="389" cy="245" r="2.100" fill="#1f1815"/>
<path d="M371 254c2 8 2 12-3 16 4 3.500 11 3.500 15-1-2-4-4-10-4-16z" fill="#b47f6b" filter="url(#b1)"/>
<path d="M369 271c4 2 9 2 13-1" stroke="#8f5f50" stroke-width="1.200" fill="none"/>
<ellipse cx="350" cy="275" rx="10" ry="12" fill="#b0796a" opacity=".5" filter="url(#b2)"/>
<ellipse cx="396" cy="268" rx="6" ry="12" fill="#b0796a" opacity=".4" filter="url(#b2)"/>
</g>
<!-- mouth -->
<path d="M369 283c3-8 14-11 22-9 2 8-2 19-10 21-8 1-13-5-12-12z" fill="#664646"/>
<path d="M372 281c5-5 12-6.500 17-5l-1 3c-6-1-10 .5-15 4z" fill="#d9cbc4"/>
<path d="M374 290c4 3 9 2 12-2l-2 5.500c-4 2-7.500 1-10-3.500z" fill="#b97378"/>
<!-- phone handset -->
<path d="M312.500 262c0-6 7-10.500 15-10l8 25-5 12c8 13 22 23 34 29 7 6 3 17-6 19-8 2-17-2-21-8-10-18-18-39-25-67z" fill="#7bba47"/>
<path d="M316 260c2-4 6-6 10-6l6 22-5 8z" fill="#9ad463"/>
<path d="M343 312c4 8 14 14 24 12" stroke="#5e9a33" stroke-width="1.500" fill="none"/>
<path d="M350 316l12 7M348 320l12 7" stroke="#69a63a" stroke-width="1" fill="none"/>
<path d="M357.500 326.500l6 8" stroke="#ddca37" stroke-width="3.200"/>
<!-- hand -->
<path d="M314 277c0-5 4-6 7-2l6 16c9-3 19-1 25 5 4 10 0 22-4 34-6 6-16 6-22 2-7-15-12-34-12-55z" fill="#c19480"/>
<path d="M326 300c6-3 15-2 21 3M324 310c7-3 15-2 21 4M325 321c6-2 13-1 18 3" stroke="#9a6d5c" stroke-width="1.200" fill="none"/>
</g>
</svg>
<!-- gradient rectangle -->
<div class="a" style="left:400px;top:171px;width:410px;height:368px;background:linear-gradient(to right,rgba(255,255,255,0) 0,#fff 99px);border:1px solid rgba(43,54,84,.75)"></div>
<!-- guides -->
<svg style="left:0;top:138px" width="829" height="417" viewBox="0 138 829 417"><path d="M118 354.500h692M468.500 150.500v398" stroke="#c4c4c4" stroke-width="1" stroke-dasharray="2 1.300" fill="none" opacity=".65"/></svg>
<div class="a" id="cap" style="left:59px;top:438px;width:541px;height:78px;background:#ffc000"></div>

<svg style="left:0;top:150px" width="100" height="190" viewBox="0 150 100 190">
<defs><clipPath id="t2c"><rect x="0" y="216" width="29.500" height="49.500"/></clipPath><clipPath id="t3c"><rect x="0" y="280" width="50" height="50"/></clipPath>
<linearGradient id="t3g" x1="0" y1="0" x2="1" y2="0"><stop offset="0" stop-color="#fff" stop-opacity="0"/><stop offset="1" stop-color="#fff"/></linearGradient></defs>
<!-- thumb 1 -->
<rect x="0" y="151" width="84" height="50.500" fill="#ffffff"/>
<rect x="0" y="151" width="70" height="50.500" fill="#dfe1e0"/>
<rect x="0" y="151" width="5" height="50.500" fill="#6a6866"/>
<rect x="5" y="152" width="12" height="20" fill="#85888c"/>
<rect x="44" y="151" width="7" height="50.500" fill="#9a9491"/><rect x="46" y="151" width="2.500" height="50.500" fill="#5c5856"/>
<rect x="55" y="151" width="5.500" height="50.500" fill="#c9c9c9"/><rect x="59.500" y="151" width="1.500" height="50.500" fill="#6e6e6e"/>
<rect x="51" y="151" width="4" height="12" fill="#a9c49a"/><rect x="61" y="151" width="9" height="8" fill="#c3d5b8"/>
<rect x="61" y="172" width="9" height="29" fill="#d0d0d2"/>
<path d="M5 170l12-1 4 28-16 3z" fill="#76b545"/>
<path d="M19 172c4-6 18-6 22 0l3 12-3 1 0 16h-22l1-18z" fill="#e6e6e8"/>
<path d="M40 178l4 8-1 12-3 3z" fill="#c29a80"/>
<ellipse cx="24" cy="160" rx="5.500" ry="6.500" fill="#c69c84"/>
<path d="M16.500 158c0-6 5-8 9-7 3 0 4.500 3 4 6-3-2-7-1-9 1l-1 6c-2-1-3-3-3-6z" fill="#1e1c1b"/>
<path d="M17 163l3-1 3 9-2 1z" fill="#7fc04c"/>
<path d="M22 184h12M27 180v14M24 196h10" stroke="#55565a" stroke-width=".7" fill="none"/>
<!-- thumb 2 -->
<rect x="0" y="215.500" width="84" height="50.500" fill="#4472c4"/>
<g clip-path="url(#t2c)"><g transform="translate(-5 216) scale(.1534 .1534) translate(-178 -191)"><use href="#pg"/></g></g>
<rect x="-.5" y="215.500" width="84.500" height="50.500" fill="none" stroke="#c4c4c4" stroke-width="1"/>
<!-- thumb 3 -->
<rect x="0" y="280" width="84" height="50.500" fill="#ffffff"/>
<g clip-path="url(#t3c)"><g transform="translate(-5 280) scale(.1534 .1534) translate(-178 -191)"><use href="#pg"/></g></g>
<rect x="29.500" y="280" width="14" height="50.500" fill="url(#t3g)"/><rect x="43.400" y="280" width="41" height="50.500" fill="#ffffff"/>
<path d="M29.500 280v50" stroke="#3a4665" stroke-width=".8"/>
<rect x="-1" y="279" width="86" height="52.500" fill="none" stroke="#c6461f" stroke-width="2"/>
</svg>
<div class="a" id="pane"></div>
<div class="a" style="left:817.5px;top:140px;width:11px;height:377px;background:#343434"></div>
<div class="a" style="left:828px;top:138px;width:1px;height:418px;background:#3b3b3b"></div>
<svg style="left:818px;top:138px" width="206" height="417" viewBox="818 138 206 417">
<defs><linearGradient id="gi" x1="0" y1="0" x2="1" y2="1"><stop offset="0" stop-color="#fafafa"/><stop offset=".5" stop-color="#9a9a9a"/><stop offset="1" stop-color="#555"/></linearGradient></defs>
<!-- work scrollbar buttons -->
<rect x="817.500" y="140" width="11" height="9.500" fill="#484848"/><path d="M820.500 146.500l2.500-2.500 2.500 2.500z" fill="#909090"/>
<rect x="817.500" y="388" width="11" height="118.500" fill="#4b4b4b"/>
<rect x="817.500" y="506.500" width="11" height="10" fill="#525252"/><path d="M820.500 510h5l-2.500 2.500z" fill="#b8b8b8"/>
<path d="M820.300 524l2.700-2.700 2.700 2.700zM820.300 527.500l2.700-2.700 2.700 2.700z" fill="#cfcfcf"/>
<path d="M820.300 533l2.700 2.700 2.700-2.700zM820.300 536.500l2.700 2.700 2.700-2.700z" fill="#cfcfcf"/>
<!-- header controls -->
<path d="M978 151.500h5.600l-2.800 3z" fill="#e6e6e6"/>
<path d="M1005.500 150l6 6m0-6l-6 6" stroke="#f2f2f2" stroke-width="1.700"/>
<!-- bucket icon -->
<path d="M849 174.500l7.500 7.500-7.500 7-7.500-7z" fill="#c9421f" transform="translate(0 -2)"/>
<path d="M849 172v6" stroke="#e8e8e8" stroke-width="1.100"/><circle cx="849" cy="178.500" r="1" fill="#f0f0f0"/>
<path d="M845 176.500l4-3.500" stroke="#f0f0f0" stroke-width="1" fill="none"/>
<path d="M851.500 178c3-1.500 5.500.5 5.500 3.500 0 1-.5 2-1.500 2-1 0-1-2-1.500-3z" fill="#f4f4f4"/>
<!-- line with caret -->
<path d="M837 200.500h7l4-4.500 4 4.500h163" fill="none" stroke="#a8a8a8" stroke-width="1.100"/>
<path d="M848.500 208v5h-5z" fill="#cfcfcf"/>
<!-- inner scrollbar -->
<rect x="1005" y="204.500" width="9.500" height="317" fill="#3c3c3c"/>
<rect x="1005" y="204.500" width="9.500" height="291" fill="#505050"/>
<rect x="1005" y="204.500" width="9.500" height="10" fill="#585858"/><path d="M1007.300 211l2.500-2.500 2.500 2.500z" fill="#9a9a9a"/>
<rect x="1005" y="512" width="9.500" height="9.500" fill="#585858"/><path d="M1007.300 515.500h5l-2.500 2.500z" fill="#c8c8c8"/>
<!-- radios -->
<circle cx="857.100" cy="231.600" r="4.300" fill="#4b4b4b"/>
<circle cx="857.100" cy="247.300" r="4.300" fill="#565656"/><circle cx="857.100" cy="247.300" r="1.900" fill="#f4f4f4"/>
<circle cx="857.100" cy="263.200" r="4.300" fill="#4b4b4b"/>
<circle cx="857.100" cy="278.900" r="4.300" fill="#4b4b4b"/>
<rect x="853.400" y="291" width="8.500" height="8.500" fill="#3f3f3f" stroke="#565656" stroke-width="1"/>
<path d="M853 307.500h148.500" stroke="#444" stroke-width="1"/>
<!-- preset gradient -->
<rect x="972.500" y="313.500" width="29" height="18" fill="#343434" stroke="#4e4e4e" stroke-width="1"/><rect x="978.500" y="317.500" width="10" height="10" fill="url(#gi)" stroke="#b8b8b8" stroke-width="1"/><path d="M993 321h5.400l-2.700 3z" fill="#f0f0f0"/>
<rect x="903.500" y="336.500" width="98" height="14.500" fill="#343434" stroke="#4e4e4e" stroke-width="1"/><path d="M993 342.500h5.400l-2.700 3z" fill="#f0f0f0"/>
<rect x="972.500" y="355.500" width="29" height="18" fill="#343434" stroke="#4e4e4e" stroke-width="1"/><rect x="978.500" y="359.500" width="10" height="10" fill="url(#gi)" stroke="#b8b8b8" stroke-width="1"/><path d="M993 363h5.400l-2.700 3z" fill="#f0f0f0"/>
<rect x="943.500" y="377.500" width="58" height="16" fill="#343434" stroke="#4e4e4e" stroke-width="1"/><path d="M994 383.500l1.700-1.700 1.700 1.700M994 387.500l1.700 1.700 1.700-1.700" fill="none" stroke="#d0d0d0" stroke-width="1"/>
<!-- colour button -->
<rect x="972.500" y="437.500" width="29" height="18.500" fill="#343434" stroke="#4e4e4e" stroke-width="1"/>
<path d="M980 445l3.500-3.500 3.500 3.500-3.500 3zM983.500 441.500v-2M987.500 444.500c1 1 1 2 .3 2.500" fill="none" stroke="#e0e0e0" stroke-width="1"/>
<rect x="978.500" y="449.300" width="10.500" height="2.700" fill="#ffffff"/><path d="M993 444.500h5.400l-2.700 3z" fill="#f0f0f0"/>
<!-- red highlight -->
<rect x="836.900" y="391.700" width="177" height="45.500" fill="none" stroke="#ff0000" stroke-width="6.600"/>
<!-- gradient stops bar -->
<rect x="867.500" y="413.500" width="88" height="19" fill="#2a2a2a" stroke="#585858" stroke-width="1"/>
<rect x="869" y="415.300" width="85" height="11" fill="#ffffff"/>
<path d="M869 415.300h7v12.500l-3.500 3.700-3.500-3.700z" fill="#ffffff"/>
<path d="M945.500 415.300h8.500v12.500l-4.250 3.700-4.250-3.700z" fill="#ffffff"/>
<path d="M877 414.500h8.500v13.500l-4.250 4-4.250-4z" fill="#ffffff" stroke="#c8603a" stroke-width="1.100"/>
<rect x="962.500" y="414.500" width="17" height="17.500" fill="#343434" stroke="#4e4e4e" stroke-width="1"/>
<rect x="985.500" y="414.500" width="17" height="17.500" fill="#343434" stroke="#4e4e4e" stroke-width="1"/>
<g fill="none" stroke="#cfcfcf" stroke-width="1"><path d="M967.500 419.500h6.500v6l-3 3-3-3v-3"/><path d="M990.500 419.500h6.500v6l-3 3-3-3v-3"/></g>
<path d="M965 418.500h3.500M966.800 416.800v3.500" stroke="#6cc04a" stroke-width="1.100"/>
<path d="M988.500 417l3 3m0-3l-3 3" stroke="#e05a3a" stroke-width="1.100"/>
<!-- spin boxes -->
<rect x="943.500" y="460.500" width="58" height="15.500" fill="#343434" stroke="#4e4e4e" stroke-width="1"/><rect x="943.500" y="480.500" width="58" height="16" fill="#343434" stroke="#4e4e4e" stroke-width="1"/><rect x="943.500" y="501" width="58" height="16" fill="#343434" stroke="#4e4e4e" stroke-width="1"/>
<g fill="none" stroke="#d0d0d0" stroke-width="1"><path d="M994 465.500l1.700-1.700 1.700 1.700M994 471.300l1.700 1.700 1.700-1.700"/><path d="M994 485.700l1.700-1.700 1.700 1.700M994 491.500l1.700 1.700 1.700-1.700"/><path d="M994 506l1.700-1.700 1.700 1.700M994 511.800l1.700 1.700 1.700-1.700"/></g>
<path d="M911.500 488.500h26.500M912 485.500v6" stroke="#d0d0d0" stroke-width="1.200"/>
<path d="M911.500 508.600h26.500M925.300 505.600v6" stroke="#d0d0d0" stroke-width="1.200"/>
<path d="M860 522.500h5M888 522.500h1M935 522.500h1" stroke="#555" stroke-width="1"/>
<!-- buttons -->
<rect x="837.500" y="527.500" width="67.500" height="17" fill="#343434" stroke="#4e4e4e" stroke-width="1"/><rect x="911.500" y="527.500" width="70.500" height="17" fill="#343434" stroke="#4e4e4e" stroke-width="1"/>
</svg>
<div class="a" id="status"></div>
<div class="a" id="taskbar"></div>
<svg style="left:0;top:555px" width="1024" height="21" viewBox="0 555 1024 21">
<path d="M101 555.500h728" stroke="#3d3d3d" stroke-width="1"/>
<rect x="775.500" y="556" width="27.500" height="15.500" fill="#454545"/>
<g fill="none" stroke="#dcdcdc" stroke-width="1.100">
<path d="M29 560.500h4l1 1 1-1h3.500v7h-3.500l-1 1-1-1h-4z"/><path d="M34 561.500v3"/>
<path d="M732 565h10M732 567.500h10M733.500 562.500l3.500-2.500 3.500 2.500"/>
<rect x="784.500" y="560.500" width="9.500" height="8"/><path d="M787 563h5v3h-5zM786.500 560.500v8"/>
<path d="M811.500 560h4v3h-4zM817.500 560h4v3h-4zM811.500 565.500h4v3h-4zM817.500 565.500h4v3h-4z"/>
<path d="M839.500 560.500h3.500l1 1 1-1h3.500v8h-3.500l-1 1-1-1h-3.500zM844 561.500v7"/>
<path d="M866 559.500h10M867.500 559.500v5.500h7v-5.500M871 565v3.500M868.500 568.700h5"/>
</g>
<path d="M890 564.500h4" stroke="#9a9a9a" stroke-width="1"/>
<path d="M898 564.500h68" stroke="#c8c8c8" stroke-width="1"/>
<path d="M932 562.500v4" stroke="#c8c8c8" stroke-width="1"/>
<rect x="919" y="560" width="3" height="9" fill="#f0f0f0"/>
<path d="M970 564.500h5M972.500 562v5" stroke="#9a9a9a" stroke-width="1"/>
<g fill="none" stroke="#dcdcdc" stroke-width="1"><rect x="1013.500" y="562" width="5" height="5"/><path d="M1014.500 560l1.500-1.500 1.500 1.500M1014.500 569l1.500 1.500 1.500-1.500M1011.500 563l-1.500 1.500 1.500 1.500M1020.500 563l1.500 1.500-1.500 1.500"/></g>
<rect x="273" y="571.500" width="22" height="5" fill="#585858"/><rect x="298" y="571.500" width="26" height="5" fill="#c46f2b"/>
<rect x="60" y="571.500" width="110" height="5" fill="#1d1d1d"/>
</svg>
<svg id="labels" style="left:0;top:0" width="1024" height="576" viewBox="0 0 1024 576">
<text x="437" y="14.300" font-size="8.800" fill="#c8c8c8" textLength="59.100" lengthAdjust="spacingAndGlyphs">プレゼンテーション1</text>
<text x="502.5" y="14.3" font-size="9" fill="#c8c8c8" textLength="3" lengthAdjust="spacingAndGlyphs">-</text>
<text x="512" y="14.3" font-size="9" fill="#c8c8c8" textLength="44" lengthAdjust="spacingAndGlyphs">PowerPoint</text>
<text x="818" y="14.300" font-size="8.800" fill="#f4f4f4" textLength="28" lengthAdjust="spacingAndGlyphs">悟 岡田</text>
<text x="15" y="37.700" font-size="9.700" font-weight="bold" fill="#ffffff" textLength="21" lengthAdjust="spacingAndGlyphs">タッチ</text>
<text x="51.500" y="37.700" font-size="9.700" fill="#dadada" textLength="22.500" lengthAdjust="spacingAndGlyphs">ホーム</text>
<text x="89" y="37.700" font-size="9.700" fill="#dadada" textLength="19" lengthAdjust="spacingAndGlyphs">挿入</text>
<text x="123" y="37.700" font-size="9.700" fill="#dadada" textLength="19" lengthAdjust="spacingAndGlyphs">描画</text>
<text x="157" y="37.700" font-size="9.700" fill="#dadada" textLength="29" lengthAdjust="spacingAndGlyphs">デザイン</text>
<text x="202.500" y="37.700" font-size="9.700" fill="#dadada" textLength="51" lengthAdjust="spacingAndGlyphs">画面切り替え</text>
<text x="270.500" y="37.700" font-size="9.700" fill="#dadada" textLength="47.900" lengthAdjust="spacingAndGlyphs">アニメーション</text>
<text x="337.500" y="37.700" font-size="9.700" fill="#dadada" textLength="50.500" lengthAdjust="spacingAndGlyphs">スライド ショー</text>
<text x="405" y="37.700" font-size="9.700" fill="#dadada" textLength="19" lengthAdjust="spacingAndGlyphs">校閲</text>
<text x="438.500" y="37.700" font-size="9.700" fill="#dadada" textLength="19" lengthAdjust="spacingAndGlyphs">表示</text>
<text x="472" y="37.700" font-size="9.700" fill="#dadada" textLength="24" lengthAdjust="spacingAndGlyphs">ヘルプ</text>
<text x="541" y="37.700" font-size="9.700" fill="#dadada" textLength="19" lengthAdjust="spacingAndGlyphs">検索</text>
<text x="933" y="37.700" font-size="9.700" font-weight="bold" fill="#ffffff" textLength="21" lengthAdjust="spacingAndGlyphs">共有</text>
<text x="979" y="37.700" font-size="9.700" font-weight="bold" fill="#ffffff" textLength="32" lengthAdjust="spacingAndGlyphs">コメント</text>
<text x="0" y="81.300" font-size="8.800" fill="#e6e6e6" textLength="5.600" lengthAdjust="spacingAndGlyphs">す</text>
<text x="10.600" y="81.300" font-size="8.800" fill="#e6e6e6" textLength="11.900" lengthAdjust="spacingAndGlyphs">ユー</text>
<text x="-6.500" y="91.600" font-size="8.800" fill="#e6e6e6" textLength="16.800" lengthAdjust="spacingAndGlyphs">設定</text>
<text x="38" y="81.300" font-size="8.800" fill="#6c6c6c" textLength="30.800" lengthAdjust="spacingAndGlyphs">図の変更</text>
<text x="78" y="81.300" font-size="8.800" fill="#e6e6e6" textLength="16.400" lengthAdjust="spacingAndGlyphs">図形</text>
<text x="113.800" y="81.300" font-size="8.800" fill="#ffffff" textLength="35.200" lengthAdjust="spacingAndGlyphs">オブジェクト</text>
<text x="119.600" y="91.800" font-size="8.800" fill="#ffffff" textLength="22.400" lengthAdjust="spacingAndGlyphs">の選択</text>
<text x="153.400" y="81.300" font-size="8.800" fill="#6c6c6c" textLength="25.600" lengthAdjust="spacingAndGlyphs">切り取り</text>
<text x="471" y="81.300" font-size="8.800" fill="#e6e6e6" textLength="28" lengthAdjust="spacingAndGlyphs">消しゴム</text>
<text x="465.400" y="91.800" font-size="8.800" fill="#e6e6e6" textLength="38.100" lengthAdjust="spacingAndGlyphs">(ストローク)</text>
<text x="523.800" y="81.300" font-size="8.800" fill="#6c6c6c" textLength="15.700" lengthAdjust="spacingAndGlyphs">文字</text>
<text x="523.800" y="91.800" font-size="8.800" fill="#6c6c6c" textLength="15.700" lengthAdjust="spacingAndGlyphs">拡大</text>
<text x="553" y="81.300" font-size="8.800" fill="#6c6c6c" textLength="16" lengthAdjust="spacingAndGlyphs">文字</text>
<text x="553" y="91.800" font-size="8.800" fill="#6c6c6c" textLength="16" lengthAdjust="spacingAndGlyphs">縮小</text>
<text x="579" y="81.300" font-size="8.800" fill="#6c6c6c" textLength="23.400" lengthAdjust="spacingAndGlyphs">フォント</text>
<text x="579.600" y="91.800" font-size="8.800" fill="#6c6c6c" textLength="13.900" lengthAdjust="spacingAndGlyphs">の色</text>
<text x="621.500" y="81.300" font-size="8.800" fill="#e6e6e6" textLength="29.200" lengthAdjust="spacingAndGlyphs">ウィンドウ</text>
<text x="618.400" y="91.800" font-size="8.800" fill="#e6e6e6" textLength="34.300" lengthAdjust="spacingAndGlyphs">に合わせる</text>
<text x="669.600" y="81.300" font-size="8.800" fill="#e6e6e6" textLength="22.900" lengthAdjust="spacingAndGlyphs">上書き</text>
<text x="673.200" y="91.800" font-size="8.800" fill="#e6e6e6" textLength="16" lengthAdjust="spacingAndGlyphs">保存</text>
<text x="698" y="81.300" font-size="8.800" fill="#e6e6e6" textLength="35" lengthAdjust="spacingAndGlyphs">電子メール</text>
<text x="736.600" y="81.300" font-size="8.800" fill="#e6e6e6" textLength="47" lengthAdjust="spacingAndGlyphs">印刷プレビュー</text>
<text x="748.800" y="91.800" font-size="8.800" fill="#e6e6e6" textLength="21.600" lengthAdjust="spacingAndGlyphs">と印刷</text>
<text x="787.400" y="81.300" font-size="8.800" fill="#e6e6e6" textLength="71.200" lengthAdjust="spacingAndGlyphs">PDF 又は XPS 形式</text>
<text x="812.300" y="91.800" font-size="8.800" fill="#e6e6e6" textLength="22.700" lengthAdjust="spacingAndGlyphs">で保存</text>
<text x="0" y="108.800" font-size="8.800" fill="#d4d4d4" textLength="14.400" lengthAdjust="spacingAndGlyphs">戻す</text>
<text x="53.800" y="108.800" font-size="8.800" fill="#d4d4d4" textLength="28.700" lengthAdjust="spacingAndGlyphs">図・画像</text>
<text x="137.800" y="108.800" font-size="8.800" fill="#d4d4d4" textLength="16.200" lengthAdjust="spacingAndGlyphs">選択</text>
<text x="337" y="108.800" font-size="8.800" fill="#d4d4d4" textLength="22.400" lengthAdjust="spacingAndGlyphs">手がき</text>
<text x="549.600" y="108.800" font-size="8.800" fill="#d4d4d4" textLength="22.900" lengthAdjust="spacingAndGlyphs">フォント</text>
<text x="618.400" y="108.800" font-size="8.800" fill="#d4d4d4" textLength="33.600" lengthAdjust="spacingAndGlyphs">画面表示</text>
<text x="755" y="108.800" font-size="8.800" fill="#d4d4d4" textLength="16.700" lengthAdjust="spacingAndGlyphs">基本</text>
<text x="0" y="127.800" font-size="8.800" fill="#e0e0e0" textLength="8" lengthAdjust="spacingAndGlyphs">存</text>
<text x="27" y="127.700" font-size="8" fill="#f0f0f0" textLength="10" lengthAdjust="spacingAndGlyphs">オフ</text>
<text x="67.500" y="460" font-size="18" fill="#303030" textLength="520" lengthAdjust="spacing">新しく置いた分岐点の位置をスライドすることで，どこまで</text>
<text x="67.500" y="483.100" font-size="18" fill="#303030" textLength="511" lengthAdjust="spacing">透明かを調節できる．場合によってはもう1つ分岐点を追加</text>
<text x="67.500" y="505.600" font-size="18" fill="#303030" textLength="38.500" lengthAdjust="spacing">する</text>
<text x="837.500" y="160.300" font-size="15" fill="#dadada" textLength="99.600" lengthAdjust="spacingAndGlyphs">背景の書式設定</text>
<text x="852.900" y="213.800" font-size="8.800" font-weight="bold" fill="#f0f0f0" textLength="32.600" lengthAdjust="spacingAndGlyphs">塗りつぶし</text>
<text x="865.400" y="234.900" font-size="8.800" fill="#d8d8d8" textLength="71.500" lengthAdjust="spacingAndGlyphs">塗りつぶし (単色)(<tspan text-decoration="underline">S</tspan>)</text>
<text x="865.400" y="250.600" font-size="8.800" fill="#d8d8d8" textLength="97.600" lengthAdjust="spacingAndGlyphs">塗りつぶし (グラデーション)(<tspan text-decoration="underline">G</tspan>)</text>
<text x="865.400" y="266.500" font-size="8.800" fill="#d8d8d8" textLength="112" lengthAdjust="spacingAndGlyphs">塗りつぶし (図またはテクスチャ)(<tspan text-decoration="underline">P</tspan>)</text>
<text x="865.400" y="282.200" font-size="8.800" fill="#d8d8d8" textLength="79.700" lengthAdjust="spacingAndGlyphs">塗りつぶし (パターン)(<tspan text-decoration="underline">A</tspan>)</text>
<text x="865.400" y="298.500" font-size="8.800" fill="#d8d8d8" textLength="104" lengthAdjust="spacingAndGlyphs">背景グラフィックを表示しない(<tspan text-decoration="underline">H</tspan>)</text>
<text x="859.600" y="326.300" font-size="8.800" fill="#d8d8d8" textLength="78.400" lengthAdjust="spacingAndGlyphs">既定のグラデーション(<tspan text-decoration="underline">R</tspan>)</text>
<text x="859.600" y="347.300" font-size="8.800" fill="#d8d8d8" textLength="29.300" lengthAdjust="spacingAndGlyphs">種類(<tspan text-decoration="underline">Y</tspan>)</text>
<text x="906.900" y="347.300" font-size="8.800" fill="#d8d8d8" textLength="16.500" lengthAdjust="spacingAndGlyphs">線形</text>
<text x="859.600" y="368" font-size="8.800" fill="#d8d8d8" textLength="30.100" lengthAdjust="spacingAndGlyphs">方向(<tspan text-decoration="underline">D</tspan>)</text>
<text x="859.600" y="388.500" font-size="8.800" fill="#d8d8d8" textLength="30.100" lengthAdjust="spacingAndGlyphs">角度(<tspan text-decoration="underline">E</tspan>)</text>
<text x="947" y="388.500" font-size="8.800" fill="#d8d8d8" textLength="9" lengthAdjust="spacingAndGlyphs">0°</text>
<text x="859.600" y="407.300" font-size="8.800" fill="#d8d8d8" textLength="73.700" lengthAdjust="spacingAndGlyphs">グラデーションの分岐点</text>
<text x="867.300" y="450" font-size="8.800" fill="#d8d8d8" textLength="20.500" lengthAdjust="spacingAndGlyphs">色(<tspan text-decoration="underline">C</tspan>)</text>
<text x="867.300" y="471.600" font-size="8.800" fill="#d8d8d8" textLength="29.300" lengthAdjust="spacingAndGlyphs">位置(<tspan text-decoration="underline">O</tspan>)</text>
<text x="947.7" y="471.600" font-size="8.800" fill="#d8d8d8" textLength="17.300" lengthAdjust="spacingAndGlyphs">12%</text>
<text x="867.300" y="491.800" font-size="8.800" fill="#d8d8d8" textLength="36.900" lengthAdjust="spacingAndGlyphs">透明度(<tspan text-decoration="underline">T</tspan>)</text>
<text x="947.7" y="491.800" font-size="8.800" fill="#d8d8d8" textLength="12.100" lengthAdjust="spacingAndGlyphs">0%</text>
<text x="867.300" y="512" font-size="8.800" fill="#d8d8d8" textLength="30" lengthAdjust="spacingAndGlyphs">明るさ(<tspan text-decoration="underline">I</tspan>)</text>
<text x="947.7" y="512.0" font-size="8.800" fill="#d8d8d8" textLength="12.100" lengthAdjust="spacingAndGlyphs">0%</text>
<text x="843.700" y="539.600" font-size="8.800" fill="#e6e6e6" textLength="54.800" lengthAdjust="spacingAndGlyphs">すべてに適用(<tspan text-decoration="underline">L</tspan>)</text>
<text x="917.600" y="539.600" font-size="8.800" fill="#e6e6e6" textLength="58.800" lengthAdjust="spacingAndGlyphs">背景のリセット(<tspan text-decoration="underline">B</tspan>)</text>
<text x="1" y="567.6" font-size="8.8" fill="#dcdcdc" textLength="14.3" lengthAdjust="spacingAndGlyphs">3/3</text>
<text x="50.500" y="567.600" font-size="8.800" fill="#dcdcdc" textLength="25.200" lengthAdjust="spacingAndGlyphs">日本語</text>
<text x="744.500" y="567.600" font-size="8.800" fill="#dcdcdc" textLength="18" lengthAdjust="spacingAndGlyphs">ノート</text>
<text x="984" y="567.6" font-size="8.8" fill="#dcdcdc" textLength="18" lengthAdjust="spacingAndGlyphs">66%</text>
</svg>
</body>
</html>
